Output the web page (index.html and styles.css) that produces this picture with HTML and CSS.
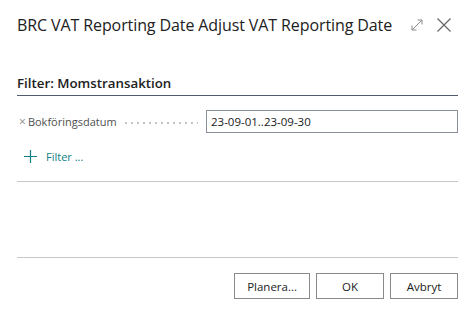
FILE: index.html
```html
<!DOCTYPE html>
<html lang="sv">
<head>
    <meta charset="UTF-8">
    <title>Adjust VAT Reporting Date</title>
    <link rel="stylesheet" href="styles.css">
</head>
<body>
    <div class="dialog">
        <div class="dialog-header">
            <h1 class="dialog-title">BRC VAT Reporting Date Adjust VAT Reporting Date</h1>
            <div class="header-icons">
                <svg class="icon-expand" width="14" height="14" viewBox="0 0 14 14">
                    <path d="M2 12 L12 2 M7.5 2 H12 V6.5 M2 7.5 V12 H6.5" fill="none" stroke="#8a8a8a" stroke-width="1"/>
                </svg>
                <svg class="icon-close" width="16" height="16" viewBox="0 0 16 16">
                    <path d="M1.5 1.5 L14.5 14.5 M14.5 1.5 L1.5 14.5" fill="none" stroke="#666" stroke-width="1.2"/>
                </svg>
            </div>
        </div>

        <div class="filter-section">
            <h2 class="filter-heading">Filter: Momstransaktion</h2>

            <div class="filter-row">
                <div class="filter-caption">
                    <span class="remove-mark">&times;</span>
                    <span class="filter-label">Bokföringsdatum</span>
                    <span class="filter-dots"></span>
                </div>
                <input class="filter-input" type="text" value="23-09-01..23-09-30">
            </div>

            <div class="add-filter">
                <svg width="13" height="13" viewBox="0 0 13 13">
                    <path d="M6.5 0 V13 M0 6.5 H13" stroke="#0e7f85" stroke-width="1.2"/>
                </svg>
                <span>Filter ...</span>
            </div>
        </div>

        <div class="dialog-footer">
            <button class="btn">Planera...</button>
            <button class="btn">OK</button>
            <button class="btn">Avbryt</button>
        </div>
    </div>
</body>
</html>
```

FILE: styles.css
```css
body {
    margin: 0;
    padding: 0;
    background-color: #fff;
    font-family: "Open Sans", "Noto Sans", sans-serif;
    color: #212121;
}

.dialog {
    width: 470px;
    height: 313px;
    box-sizing: border-box;
    padding: 0 12px 0 17px;
}

.dialog-header {
    display: flex;
    align-items: center;
    justify-content: space-between;
    height: 50px;
}

.dialog-title {
    margin: 0;
    font-size: 16px;
    font-weight: 400;
    letter-spacing: -0.1px;
    color: #212121;
}

.header-icons {
    display: flex;
    align-items: center;
    gap: 12px;
    margin-right: 6px;
}

.filter-section {
    margin-top: 21px;
    border-bottom: 1px solid #c8c8c8;
    height: 110px;
}

.filter-heading {
    margin: 0;
    font-size: 13.3px;
    font-weight: 600;
    line-height: 24px;
    color: #212121;
    border-bottom: 1px solid #505c6d;
}

.filter-row {
    display: flex;
    align-items: center;
    margin-top: 14px;
    height: 23px;
}

.filter-caption {
    display: flex;
    align-items: center;
    width: 189px;
}

.remove-mark {
    font-size: 12px;
    color: #8a8a8a;
    margin: 0 2px 0 2px;
}

.filter-label {
    font-size: 11px;
    color: #505050;
}

.filter-dots {
    flex: 1;
    height: 2px;
    margin: 3px 8px 0 6px;
    background-image: radial-gradient(circle, #c4c4c4 0.8px, transparent 1px);
    background-size: 6px 2px;
}

.filter-input {
    flex: 1;
    height: 23px;
    box-sizing: border-box;
    border: 1px solid #8a9099;
    padding: 0 4px;
    font-family: "Open Sans", sans-serif;
    font-size: 11.5px;
    color: #212121;
}

.add-filter {
    display: flex;
    align-items: center;
    gap: 9px;
    margin-top: 16px;
    margin-left: 7px;
    font-size: 11px;
    color: #0e7f85;
}

.dialog-footer {
    display: flex;
    justify-content: flex-end;
    gap: 6px;
    margin-top: 75px;
    padding-top: 15px;
    border-top: 1px solid #c8c8c8;
}

.btn {
    height: 26px;
    min-width: 68px;
    padding: 0 12px;
    background: #fff;
    border: 1px solid #8a8a8a;
    font-family: "Open Sans", sans-serif;
    font-size: 11.5px;
    color: #212121;
}
```
